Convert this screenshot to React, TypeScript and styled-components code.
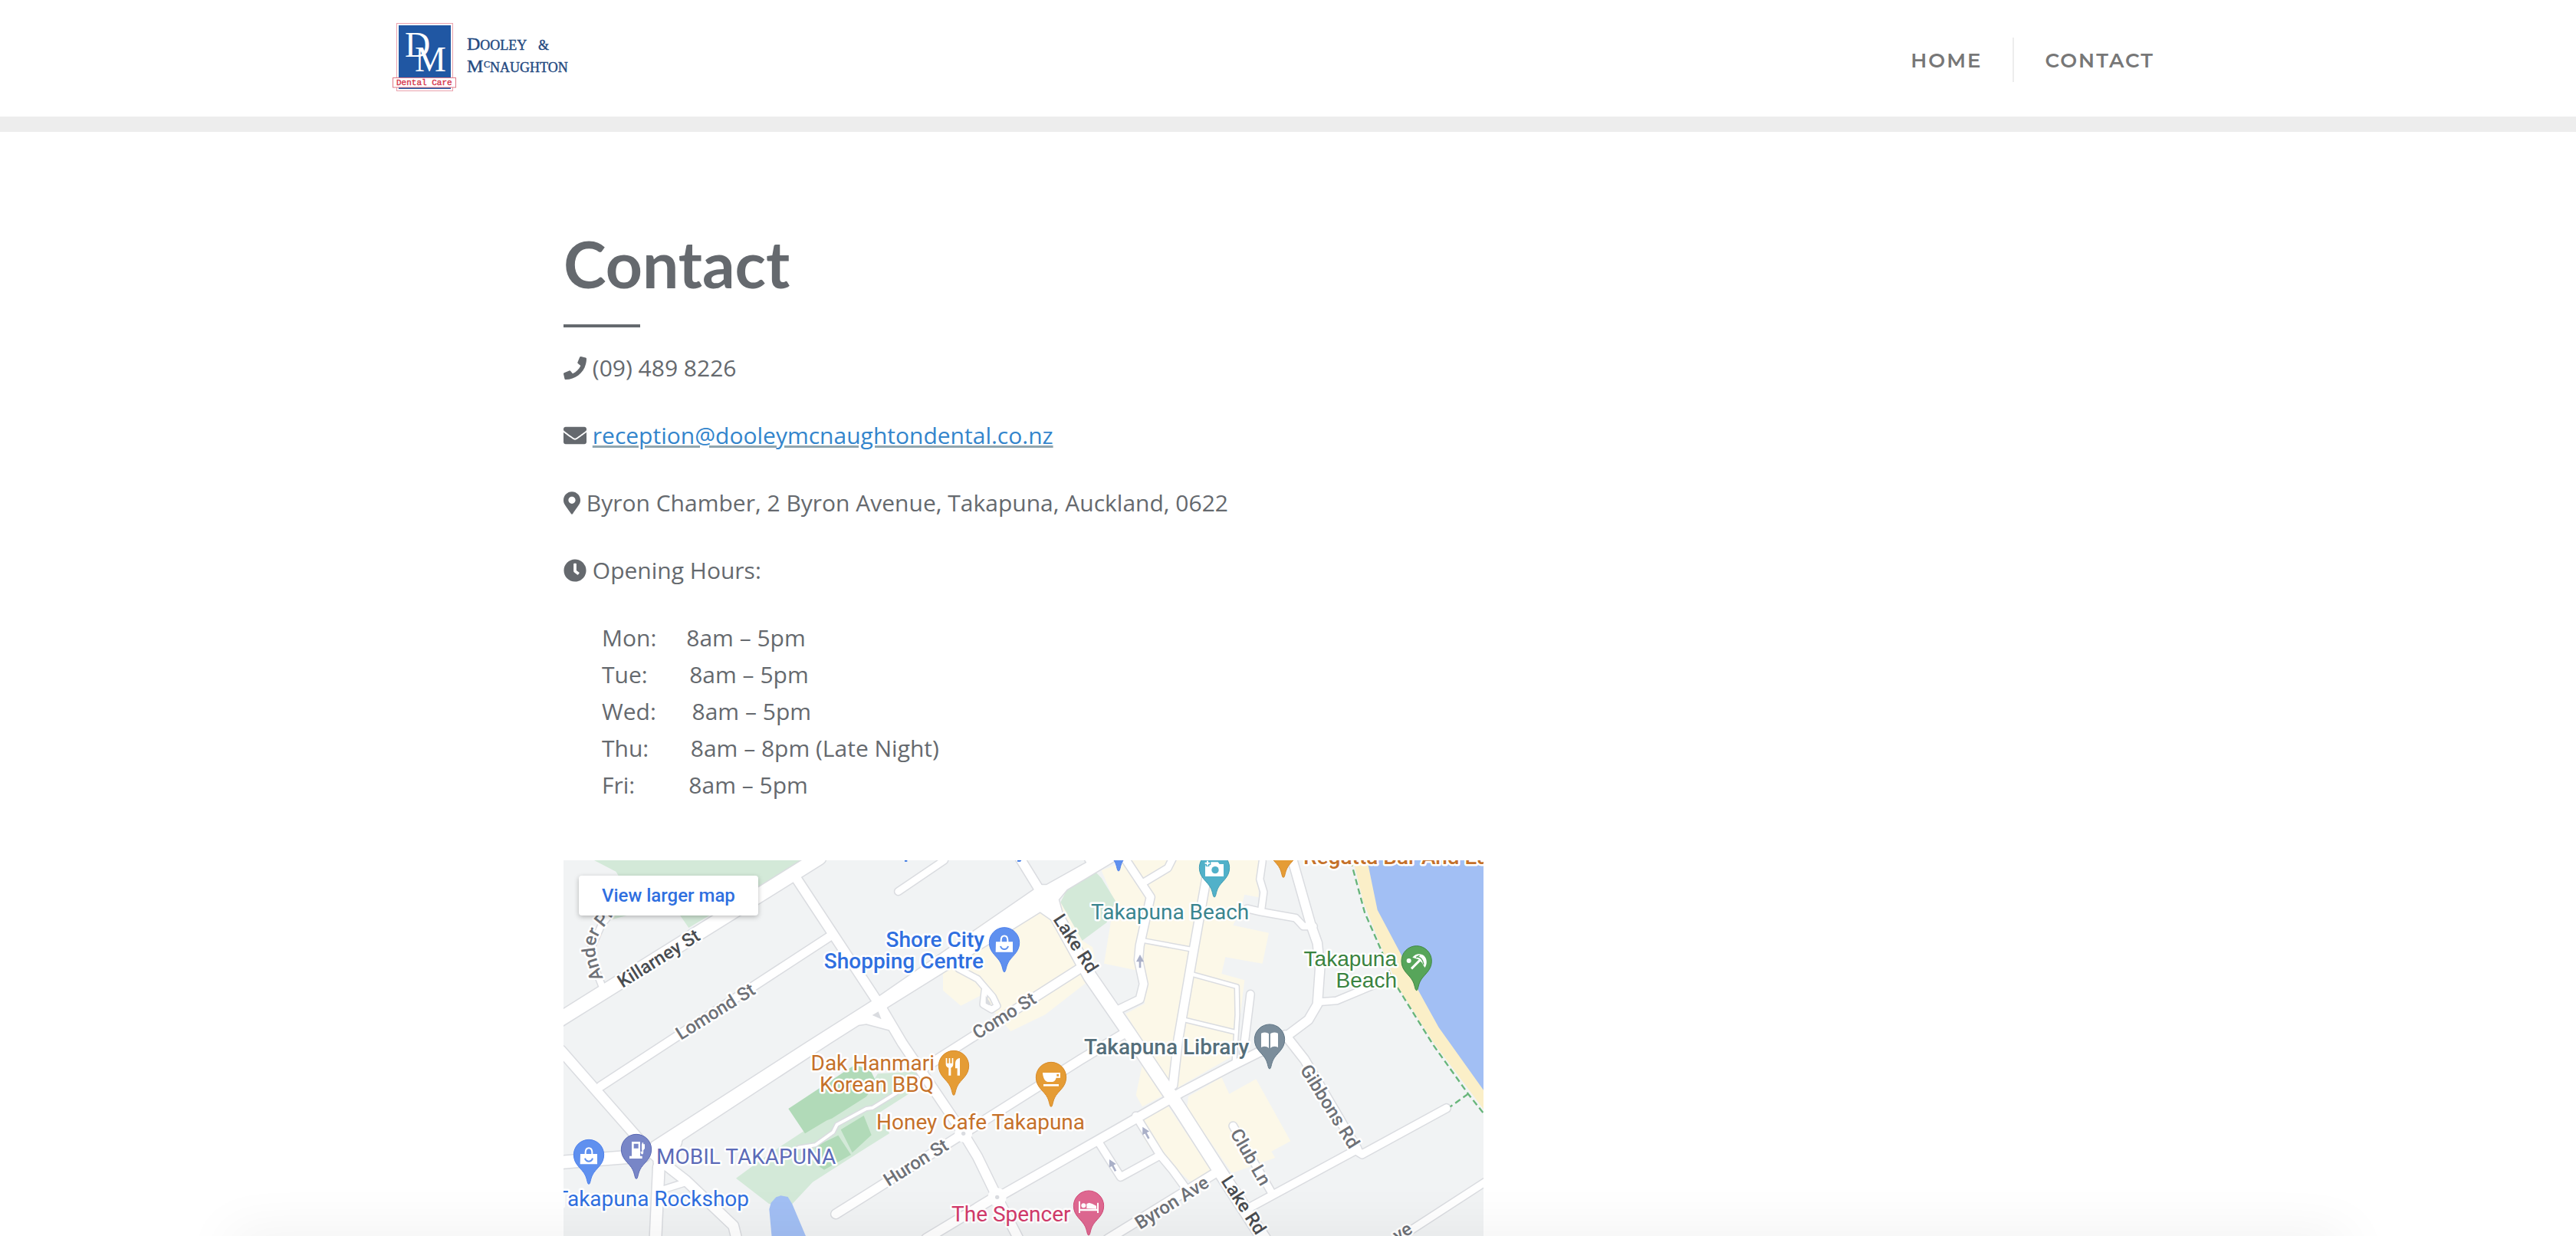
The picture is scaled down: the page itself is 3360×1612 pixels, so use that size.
import React from "react";
import styled, { createGlobalStyle } from "styled-components";
import { FaPhone, FaEnvelope, FaMapMarkerAlt, FaClock } from "react-icons/fa";

const INK = "#65696e";

const GlobalStyle = createGlobalStyle`
  *, *::before, *::after { box-sizing: border-box; }
  body {
    margin: 0;
    background: #fff;
    color: ${INK};
    font-family: "Open Sans", "Noto Sans", sans-serif;
    font-size: 30px;
    line-height: 48px;
  }
`;

const Page = styled.div`
  display: flex;
  flex-direction: column;
  min-height: 100vh;
`;

const Header = styled.header`
  border-bottom: 20px solid #ededed;
`;

const HeaderInner = styled.div`
  display: flex;
  align-items: center;
  justify-content: space-between;
  max-width: 2340px;
  margin: 0 auto;
  padding: 28px 0;
`;

const LogoLink = styled.a`
  display: block;
  line-height: 0;
`;

const NavList = styled.ul`
  display: flex;
  margin: 4px 0 0;
  padding: 0;
  list-style: none;
`;

const NavItem = styled.li`
  padding: 0 40px;
  line-height: 56px;
  & + & {
    border-left: 2px solid #ededed;
  }
`;

const NavLink = styled.a`
  color: #777;
  font-family: Montserrat, Lato, sans-serif;
  font-size: 26px;
  font-weight: 600;
  letter-spacing: 2px;
  text-decoration: none;
`;

const Main = styled.main`
  display: flex;
  flex: 1;
  flex-direction: column;
  width: 100%;
  max-width: 1890px;
  margin: 0 auto;
  padding-top: 124px;
`;

const Title = styled.h1`
  margin: 0;
  font-family: Lato, sans-serif;
  font-size: 84px;
  font-weight: 700;
  line-height: 96px;
  &::after {
    content: "";
    display: block;
    width: 100px;
    height: 4px;
    margin: 31px 0 29px;
    background: ${INK};
  }
`;

const Line = styled.p`
  margin: 0 0 40px;
  svg {
    vertical-align: -4px;
  }
`;

const MarkerIcon = styled(FaMapMarkerAlt)`
  width: 22px;
`;

const MailLink = styled.a`
  color: #3385cc;
  text-decoration: underline;
  text-decoration-color: #8fa5ae;
`;

const Hours = styled.ul`
  margin: 0 0 74px;
  padding: 0 0 0 50px;
  list-style: none;
  white-space: pre;
`;

const MapFrame = styled.section`
  position: relative;
  display: flex;
  flex: 1;
  width: 100%;
  max-width: 1200px;
  min-height: 480px;
  overflow: hidden;
  background: #f1f3f4;
`;

const MapCanvas = styled.svg`
  flex: 1;
  width: 100%;
  height: auto;
`;

const LargerMap = styled.a`
  position: absolute;
  top: 20px;
  left: 20px;
  padding: 0 30px;
  border-radius: 4px;
  background: #fff;
  box-shadow: 0 2px 6px rgba(0, 0, 0, 0.26);
  color: #2f6fe0;
  font-family: Roboto, sans-serif;
  font-size: 24px;
  font-weight: 500;
  line-height: 52px;
  text-decoration: none;
`;

const BottomShade = styled.div`
  position: fixed;
  right: 300px;
  bottom: -40px;
  left: 300px;
  height: 40px;
  box-shadow: 0 0 70px rgba(0, 0, 0, 0.08);
  pointer-events: none;
`;

const Poi = styled.text<{ $color: string; $bold?: boolean; $face?: string }>`
  fill: ${(p) => p.$color};
  font-family: ${(p) => p.$face || "Roboto"}, sans-serif;
  font-size: 28px;
  font-weight: ${(p) => (p.$bold ? 500 : 400)};
  paint-order: stroke;
  stroke: #fff;
  stroke-width: 5px;
  stroke-linejoin: round;
`;

const Street = styled.text<{ $major?: boolean }>`
  fill: ${(p) => (p.$major ? "#494c50" : "#6e7177")};
  font-family: Roboto, sans-serif;
  font-size: 24px;
  font-weight: 500;
  paint-order: stroke;
  stroke: #fff;
  stroke-width: 5px;
  stroke-linejoin: round;
`;

const LogoText = styled.text<{ $size: number; $fill: string; $mono?: boolean }>`
  fill: ${(p) => p.$fill};
  font-family: ${(p) => (p.$mono ? '"Liberation Mono", monospace' : '"Liberation Serif", serif')};
  font-size: ${(p) => p.$size}px;
  stroke: ${(p) => p.$fill};
  stroke-width: ${(p) => (p.$size < 40 ? "0.4px" : "0")};
`;

function Logo() {
  const navy = "#23497f";
  return (
    <svg width="240" height="96" viewBox="0 0 240 96" role="img" aria-label="Dooley & McNaughton Dental Care">
      <rect x="7.5" y="2.5" width="73" height="88" fill="#fff" stroke="#eba3ad" />
      <rect x="10" y="5" width="68" height="83" fill="#2057a3" />
      <LogoText $size={46} $fill="#fff" x="18" y="46">D</LogoText>
      <LogoText $size={46} $fill="#fff" x="31" y="65">M</LogoText>
      <rect x="2.5" y="73.500" width="82" height="12.500" fill="#fff" stroke="#e07886" />
      <LogoText $size={11} $fill="#d5344b" $mono x="7" y="83">Dental Care</LogoText>
      <LogoText $size={24} $fill={navy} x="99" y="37">
        D<tspan fontSize="18">OOLEY</tspan>
      </LogoText>
      <LogoText $size={18} $fill={navy} x="192" y="37">&amp;</LogoText>
      <LogoText $size={24} $fill={navy} x="99" y="66">
        M<tspan fontSize="12" x="121" y="60">C</tspan>
        <tspan fontSize="18" x="129" y="66">NAUGHTON</tspan>
      </LogoText>
    </svg>
  );
}

/* Map geometry is drawn on a grid three times finer than the labels. */
const AREAS: [string, string][] = [
  ["#d3e9d8", "120,0 205,44 215,60 190,232 225,222 420,170 455,214 490,264 935,0"],
  ["#fcf8e8", "1825,129 1620,260 1485,434 1485,509 1555,569 1630,530 1750,669 1885,604 2045,479 2080,380 2070,340 2030,314 1945,164"],
  ["#fcf8e8", "2105,39 2215,0 2720,0 2720,145 2665,134 2650,190 2620,254 2760,284 2735,404 2590,379 2575,444 2665,469 2630,760 2385,900 2200,600 2275,560 2240,430 2115,404 2155,159"],
  ["#fcf8e8", "2265,799 2240,919 2265,964 2350,919"],
  ["#fcf8e8", "2240,1030 2265,1010 2365,960 2535,1214 2455,1259 2400,1210 2290,1120"],
  ["#fcf8e8", "2445,924 2575,849 2605,914 2710,856 2845,1099 2770,1139 2785,1164 2615,1224 2440,969"],
  ["#d3e9d8", "2085,49 2105,70 2160,159 2125,244 2030,314 1945,164 1970,114"],
  ["#d3e9d8", "675,1244 810,1145 940,1060 1185,905 1230,835 1400,825 1420,870 1240,985 1275,1069 1185,1125 975,1259 895,1345 805,1345"],
  ["#b1dab8", "880,972 1140,800 1200,820 1225,870 1185,925 1050,1010 1030,1018 945,1069"],
  ["#b1dab8", "1085,1054 1175,999 1205,1075 1130,1144"],
  ["#b1dab8", "985,1120 1075,1076 1125,1152 1020,1211 990,1190"],
  ["#a2bff4", "805,1365 812,1340 832,1318 850,1312 878,1317 895,1345 950,1475 815,1475"],
  ["#fbefc8", "3090,0 3130,164 3200,340 3265,494 3405,714 3600,974 3600,0"],
  ["#a2bff4", "3145,0 3185,194 3275,364 3345,509 3425,654 3600,899 3600,0"],
];

const ROADS: [number, string][] = [
  [12, "920,1124 985,1114 1055,1064 1070,1034 1185,972 1210,968 1305,909 1385,850"],
  [14, "2270,314 2460,349"],
  [14, "2465,447 2635,494 2637,604 2625,790"],
  [14, "2430,624 2625,671"],
  [22, "1545,424 1620,464 1680,534 1697,570 1675,584 1642,564 1648,510"],
  [24, "150,490 115,400 110,340 150,250 200,190"],
  [24, "2735,5 2725,74 2740,124 2730,199"],
  [26, "2675,189 2730,202 2865,226 2895,258 2935,258"],
  [26, "2960,554 3025,549 3205,474"],
  [26, "1310,122 1490,0"],
  [26, "2275,84 2365,30 2385,-10"],
  [28, "2688,524 2660,750"],
  [30, "2195,-10 2297,144 2255,334 2250,390 2270,484 2255,544 2170,585"],
  [28, "2095,1105 2180,1239 2335,1154"],
  [28, "2240,1000 2335,1154 2385,1214 2440,1290"],
  [28, "2620,1039 2770,1299"],
  [28, "3620,1250 3250,1490"],
  [30, "2690,1356 3100,1134 3125,1150 3455,970"],
  [32, "2530,-10 2460,384 2405,704 2385,880"],
  [34, "1785,-10 1865,120"],
  [32, "1040,299 145,884"],
  [34, "2850,-10 2925,254 2950,324 2960,424 2950,564 2915,624 2835,684 2735,744 2615,804 2415,909 2365,939 2085,1099 1725,1304"],
  [34, "2825,684 2845,710 2900,780 3105,1130"],
  [34, "1065,1384 1185,1309 1565,1069 2025,779 2190,680"],
  [34, "2550,1224 2130,1482"],
  [34, "2035,414 1400,819"],
  [36, "910,69 1240,570 1325,714 1565,1069 1620,1160 1695,1314 1780,1480"],
  [36, "1695,1314 1420,1480"],
  [38, "-10,744 315,1114 385,1180 480,1254 665,1430 680,1490"],
  [24, "390,1288 485,1258"],
  [44, "373,1200 360,1480"],
  [48, "-15,1182 315,1156"],
  [64, "430,1100 385,1180"],
  [54, "-20,626 1000,-10"],
  [50, "1900,164 2060,454 2215,679 2413,974 2570,1219 2740,1480"],
];

const AVENUE =
  "345,1104 950,714 1230,536 1835,119 1865,97 1890,97 2047,9 2035,-9 2175,-9 1970,114 1937,154 1950,200 1920,240 1865,202 1265,576 1275,664 1185,640 1155,644 1045,714 465,1094 440,1135 330,1140";

const PIN = "M0,115C-6,115-6,96-14,80C-26,54-59,40-59,0A59,59 0 1 1 59,0C59,40 26,54 14,80C6,96 6,115 0,115Z";

type PinProps = { x: number; y: number; fill: string; edge: string; children?: React.ReactNode };
const Pin = ({ x, y, fill, edge, children }: PinProps) => (
  <g transform={`translate(${x} ${y})`} fill="#fff">
    <path d={PIN} fill={fill} stroke={edge} strokeWidth="3" />
    {children}
  </g>
);

const Bag = () => (
  <>
    <path d="M-33-3H33V37H-34Z" />
    <path d="M-13,0V-10C-12-32 12-32 13-10V0" fill="none" stroke="#fff" strokeWidth="6" />
    <path d="M-15,14C-10,30 10,30 15,14" fill="none" stroke="#5f90ef" strokeWidth="6" />
  </>
);

const Arrow = ({ x, y, turn }: { x: number; y: number; turn: number }) => (
  <path d="M0-26L15,2H4V26H-4V2H-15Z" fill="#aab0c8" transform={`translate(${x} ${y}) rotate(${turn})`} />
);

const STREETS: [string, number, number, number, boolean][] = [
  ["Killarney St", 77, 167, -32, true],
  ["Lomond St", 153, 235, -32, false],
  ["Como St", 540, 234, -32, false],
  ["Lake Rd", 638, 77, 57, true],
  ["Huron St", 424, 426, -32, false],
  ["Gibbons Rd", 960, 273, 58, false],
  ["Club Ln", 869, 356, 60, false],
  ["Lake Rd", 857, 418, 57, true],
  ["Byron Ave", 752, 482, -32, false],
  ["ve", 1088, 498, -32, false],
];

const BLUE = "#2f6fe0";
const RUST = "#c5712a";
const POIS: [string, number, number, string, "start" | "end", boolean, string?][] = [
  ["Shore City", 549, 113, BLUE, "end", true],
  ["Shopping Centre", 548, 141, BLUE, "end", true],
  ["Takapuna Beach", 688, 77, "#3a858f", "start", false],
  ["Regatta Bar And Eatery", 965, 5, RUST, "start", true],
  ["Takapuna Library", 679, 253, "#546e7a", "start", true],
  ["Takapuna", 1087, 138, "#3a8340", "end", false, '"Liberation Sans"'],
  ["Beach", 1087, 166, "#3a8340", "end", false, '"Liberation Sans"'],
  ["Dak Hanmari", 484, 274, RUST, "end", false],
  ["Korean BBQ", 483, 302, RUST, "end", false],
  ["Honey Cafe Takapuna", 408, 351, RUST, "start", false],
  ["MOBIL TAKAPUNA", 121, 396, "#5c6bb8", "start", false],
  ["Takapuna Rockshop", 242, 451, BLUE, "end", false],
  ["The Spencer", 506, 471, "#d23a6b", "start", false],
];

function StreetMap() {
  return (
    <MapCanvas viewBox="0 0 1200 490" preserveAspectRatio="xMinYMin slice" role="img" aria-label="Map of Takapuna">
      <g transform="scale(0.333333)" strokeLinecap="round" strokeLinejoin="round">
        {AREAS.map(([fill, points]) => (
          <polygon key={points} fill={fill} points={points} />
        ))}
        <g fill="none" stroke="#dadce0">
          {ROADS.map(([w, points]) => (
            <polyline key={points} points={points} strokeWidth={w + 9} />
          ))}
          <polygon points={AVENUE} strokeWidth="9" />
        </g>
        <g fill="none" stroke="#fff">
          {ROADS.map(([w, points]) => (
            <polyline key={points} points={points} strokeWidth={w} />
          ))}
        </g>
        <polygon points={AVENUE} fill="#fff" />
        <path d="M1652,530L1672,560L1666,568L1652,560Z" fill="#dadce0" />
        <circle cx="1565" cy="1069" r="34" fill="#fff" />
        <circle cx="1565" cy="1069" r="8" fill="#dadce0" />
        <circle cx="1697" cy="1318" r="36" fill="#fff" />
        <circle cx="1697" cy="1318" r="8" fill="#dadce0" />
        <path d="M1208,606L1232,592L1244,622Z" fill="#dadce0" />
        <path
          d="M3080,0L3135,204L3205,364L3240,460L3405,725L3540,914L3600,990M3540,914L3470,964"
          fill="none"
          stroke="#67b57a"
          strokeWidth="7"
          strokeDasharray="24 14"
          strokeLinecap="butt"
        />
        <Arrow x={2256} y={395} turn={0} />
        <Arrow x={2278} y={1066} turn={-28} />
        <Arrow x={2148} y={1193} turn={-28} />
        <path d="M1335,0H1345V5H1335ZM1776,0H1792L1788,5H1776Z" fill={BLUE} />
      </g>

      {STREETS.map(([name, x, y, turn, major]) => (
        <Street key={name + x} $major={major} transform={`translate(${x} ${y}) rotate(${turn})`}>
          {name}
        </Street>
      ))}
      <path id="ander" d="M52,154C44,132 38,116 43,104C47,92 54,86 62,75L90,35" fill="none" />
      <Street>
        <textPath href="#ander">Ander Pl</textPath>
      </Street>

      <g transform="scale(0.333333)">
        <Pin x={1725} y={322} fill="#5f90ef" edge="#4d80ea"><Bag /></Pin>
        <Pin x={99} y={1152} fill="#5f90ef" edge="#4d80ea"><Bag /></Pin>
        <Pin x={2172} y={-73} fill="#5f90ef" edge="#4d80ea" />
        <Pin x={2817} y={-48} fill="#e59c35" edge="#d68a2a" />
        <Pin x={285} y={1131} fill="#7886c7" edge="#5a68b4">
          <path fillRule="evenodd" d="M-18-30H15V26H23V36H-27V26H-18ZM-10-22V-4H8V-22Z" />
          <path d="M25-26V-4M25-10V12C25,20 19,18 19,8" fill="none" stroke="#fff" strokeWidth="5" />
          <path d="M21-20H33V-4L29,2H21Z" />
        </Pin>
        <Pin x={2547} y={29} fill="#51b1c9" edge="#3e9bb0">
          <path d="M-36-10H-16V-22H14L20-14H36V34H-36Z" />
          <circle cx="3" cy="9" r="14" fill="#51b1c9" />
          <path d="M-40-18H-14M-27-31V-5" stroke="#51b1c9" strokeWidth="14" />
          <path d="M-37-18H-18M-27-27V-9" stroke="#fff" strokeWidth="6" />
        </Pin>
        <Pin x={3338} y={394} fill="#57a55a" edge="#3e8741">
          <circle cx="-30" cy="-1" r="9" />
          <path d="M-20,30L18-8" stroke="#fff" strokeWidth="9" />
          <path d="M-16-14C-2-34 22-28 30-20C42-8 42,14 32,26L22,8L8,-6Z" />
          <path d="M2-16C14-16 24-8 28,14M-2-14L12-22" fill="none" stroke="#57a55a" strokeWidth="4" />
        </Pin>
        <Pin x={2763} y={701} fill="#7b8d9b" edge="#5e7485">
          <path d="M-33-24C-20-30-10-28-3-22V34C-12,26-22,26-33,31ZM33-24C20-30 10-28 3-22V34C12,26 22,26 33,31Z" />
        </Pin>
        <Pin x={1527} y={804} fill="#e59c35" edge="#d68a2a">
          <path d="M-31-30H-26V-10H-19V-30H-14V-10H-7V-30H-2V-6C-2,2-6,6-11,8V38H-20V8C-26,6-31,2-31-6Z" />
          <path d="M24-30V38H14V10H6V-8C6-20 12-29 24-30Z" />
        </Pin>
        <Pin x={1908} y={849} fill="#e59c35" edge="#d68a2a">
          <path fillRule="evenodd" d="M-33-18H36V2H20C18,12 10,18 4,18H-14C-24,16-32,2-33-18ZM22-12V-4H30V-12Z" />
          <path d="M-30,27H30V35H-30Z" />
        </Pin>
        <Pin x={2055} y={1352} fill="#df6891" edge="#d14976">
          <path d="M-39-18H-33V12H33V-12H39V28H33V20H-33V28H-39Z" />
          <circle cx="-20" cy="-1" r="9" />
          <path d="M-8,10V-8L2-12L14-8L30,0V12Z" />
        </Pin>
      </g>

      {POIS.map(([name, x, y, color, anchor, bold, face]) => (
        <Poi key={name} x={x} y={y} textAnchor={anchor} $color={color} $bold={bold} $face={face}>
          {name}
        </Poi>
      ))}
    </MapCanvas>
  );
}

const HOURS = [
  "Mon:     8am – 5pm",
  "Tue:       8am – 5pm",
  "Wed:      8am – 5pm",
  "Thu:       8am – 8pm (Late Night)",
  "Fri:         8am – 5pm",
];

export default function App() {
  return (
    <Page>
      <GlobalStyle />
      <Header>
        <HeaderInner>
          <LogoLink href="#home">
            <Logo />
          </LogoLink>
          <nav aria-label="Main">
            <NavList>
              <NavItem><NavLink href="#home">HOME</NavLink></NavItem>
              <NavItem><NavLink href="#contact">CONTACT</NavLink></NavItem>
            </NavList>
          </nav>
        </HeaderInner>
      </Header>
      <Main>
        <Title>Contact</Title>
        <Line><FaPhone aria-hidden /> (09) 489 8226</Line>
        <Line>
          <FaEnvelope aria-hidden />{" "}
          <MailLink href="mailto:reception@dooleymcnaughtondental.co.nz">reception@dooleymcnaughtondental.co.nz</MailLink>
        </Line>
        <Line><MarkerIcon aria-hidden /> Byron Chamber, 2 Byron Avenue, Takapuna, Auckland, 0622</Line>
        <Line><FaClock aria-hidden /> Opening Hours:</Line>
        <Hours>
          {HOURS.map((entry) => (
            <li key={entry}>{entry}</li>
          ))}
        </Hours>
        <MapFrame>
          <StreetMap />
          <LargerMap href="#map">View larger map</LargerMap>
        </MapFrame>
      </Main>
      <BottomShade />
    </Page>
  );
}
